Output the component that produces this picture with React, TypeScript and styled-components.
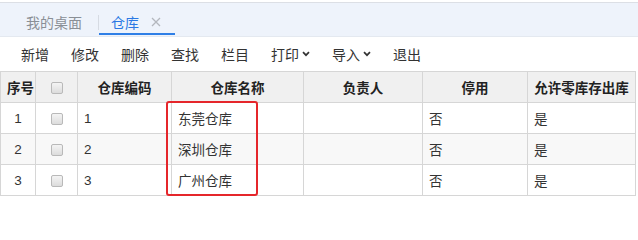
import React from 'react'
import styled, { createGlobalStyle } from 'styled-components'

const GlobalStyle = createGlobalStyle`
  html, body {
    margin: 0;
    padding: 0;
    background: #fff;
  }
  body {
    font-family: "Liberation Sans", "Noto Sans CJK SC", Arial, sans-serif;
    color: #333;
  }
`

const StyledPage = styled.div`
  width: 638px;
  height: 230px;
  overflow: hidden;
`

const StyledTabBar = styled.div`
  margin-top: 2px;
  height: 33px;
  display: flex;
  align-items: stretch;
  background: #eef3fb;
  border-top: 1px solid #dcdfe5;
  border-bottom: 1px solid #e4e9f0;
  padding-left: 26px;
  font-size: 14px;
`

const StyledTab = styled.div<{ $active?: boolean }>`
  box-sizing: border-box;
  height: 32px;
  display: flex;
  align-items: center;
  gap: 12px;
  padding: 8px ${({ $active }) => ($active ? '14px 0 12px' : '15px 0 0')};
  color: ${({ $active }) => ($active ? '#2a78e4' : '#8a8f96')};
  border-bottom: 2px solid ${({ $active }) => ($active ? '#2f7fe6' : 'transparent')};
`

const StyledDivider = styled.span`
  align-self: center;
  width: 1px;
  height: 15px;
  margin: 6px 0 0 1px;
  background: #d6dbe3;
`

const StyledToolbar = styled.div`
  height: 34px;
  display: flex;
  align-items: center;
  gap: 22px;
  padding-left: 21px;
  font-size: 14px;
  color: #333;
`

const StyledTool = styled.span`
  display: inline-flex;
  align-items: center;
  gap: 3px;
  white-space: nowrap;
`

const StyledTableWrap = styled.div`
  position: relative;
  width: 635px;
`

const StyledTable = styled.table`
  border-collapse: collapse;
  table-layout: fixed;
  width: 635px;
  font-size: 13.5px;
  color: #333;

  th,
  td {
    border: 1px solid #d6d6d6;
    padding: 0 6px;
    white-space: nowrap;
    overflow: hidden;
  }

  th {
    height: 30px;
    background: #f0f0f0;
    font-weight: bold;
    text-align: center;
    color: #222;
  }

  td {
    height: 30px;
    text-align: left;
  }

  tbody tr:nth-child(even) td {
    background: #f8f8f8;
  }

  td.center {
    text-align: center;
    padding: 0;
  }
`

const StyledCheck = styled.span`
  display: inline-block;
  box-sizing: border-box;
  width: 12px;
  height: 12px;
  vertical-align: middle;
  border: 1px solid #b9b9b9;
  border-radius: 2px;
  background: linear-gradient(#f4f4f4, #dcdcdc);
`

const StyledHighlight = styled.div`
  position: absolute;
  left: 166px;
  top: 30px;
  width: 92px;
  height: 95px;
  box-sizing: border-box;
  border: 2px solid #e5262b;
  border-radius: 3px;
  pointer-events: none;
`

const Chevron = () => (
  <svg width="8" height="6" viewBox="0 0 8 6">
    <polyline points="1,1.2 4,4.2 7,1.2" fill="none" stroke="#333" strokeWidth="1.7" />
  </svg>
)

const CloseIcon = () => (
  <svg width="10" height="10" viewBox="0 0 10 10">
    <path d="M1 1 L9 9 M9 1 L1 9" stroke="#b3b7bd" strokeWidth="1.3" />
  </svg>
)

const columns = [
  { label: '序号', width: 35 },
  { label: '', width: 42 },
  { label: '仓库编码', width: 94 },
  { label: '仓库名称', width: 132 },
  { label: '负责人', width: 119 },
  { label: '停用', width: 105 },
  { label: '允许零库存出库', width: 108 },
]

const rows = [
  { no: 1, code: '1', name: '东莞仓库' },
  { no: 2, code: '2', name: '深圳仓库' },
  { no: 3, code: '3', name: '广州仓库' },
]

export default function App() {
  return (
    <StyledPage>
      <GlobalStyle />
      <StyledTabBar>
        <StyledTab>我的桌面</StyledTab>
        <StyledDivider />
        <StyledTab $active>
          仓库
          <CloseIcon />
        </StyledTab>
      </StyledTabBar>
      <StyledToolbar>
        <StyledTool>新增</StyledTool>
        <StyledTool>修改</StyledTool>
        <StyledTool>删除</StyledTool>
        <StyledTool>查找</StyledTool>
        <StyledTool>栏目</StyledTool>
        <StyledTool>
          打印
          <Chevron />
        </StyledTool>
        <StyledTool>
          导入
          <Chevron />
        </StyledTool>
        <StyledTool>退出</StyledTool>
      </StyledToolbar>
      <StyledTableWrap>
        <StyledTable>
          <colgroup>
            {columns.map((c, i) => (
              <col key={i} style={{ width: c.width }} />
            ))}
          </colgroup>
          <thead>
            <tr>
              {columns.map((c, i) => (
                <th key={i}>{i === 1 ? <StyledCheck /> : c.label}</th>
              ))}
            </tr>
          </thead>
          <tbody>
            {rows.map((r) => (
              <tr key={r.no}>
                <td className="center">{r.no}</td>
                <td className="center">
                  <StyledCheck />
                </td>
                <td>{r.code}</td>
                <td>{r.name}</td>
                <td></td>
                <td>否</td>
                <td>是</td>
              </tr>
            ))}
          </tbody>
        </StyledTable>
        <StyledHighlight />
      </StyledTableWrap>
    </StyledPage>
  )
}
